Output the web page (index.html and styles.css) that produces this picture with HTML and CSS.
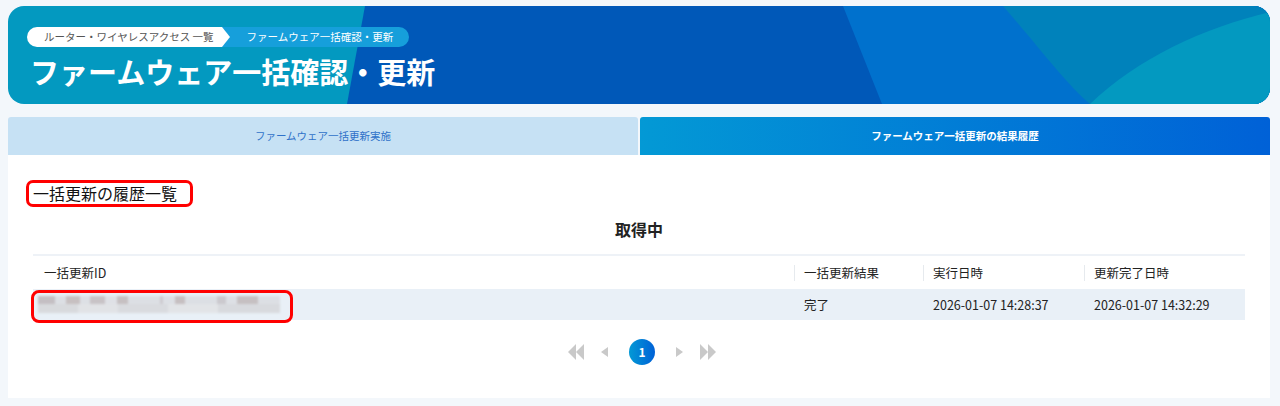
FILE: index.html
```html
<!DOCTYPE html>
<html lang="ja">
<head>
<meta charset="UTF-8">
<meta name="viewport" content="width=device-width, initial-scale=1.0">
<title>ファームウェア一括確認・更新</title>
<link rel="stylesheet" href="styles.css">
</head>
<body>

<div class="page">
    <header class="hero">
        <svg class="hero-bg" viewBox="0 0 1262 98" preserveAspectRatio="none">
            <rect width="1262" height="98" fill="#0399c0"/>
            <polygon points="357,0 1262,0 1262,98 339,98" fill="#0058b8"/>
            <polygon points="835,0 1262,0 1262,98 874,98" fill="#0071cd"/>
            <path d="M995,0 C1030,40 1058,78 1082,98 L1262,98 L1262,0 Z" fill="#0082bb"/>
            <path d="M1082,98 C1130,52 1195,22 1262,6 L1262,98 Z" fill="#0399c0"/>
        </svg>
        <div class="crumbs">
            <span class="crumb crumb-link">ルーター・ワイヤレスアクセス 一覧</span>
            <span class="crumb crumb-current">ファームウェア一括確認・更新</span>
        </div>
        <h1>ファームウェア一括確認・更新</h1>
    </header>

    <div class="tabs">
        <div class="tab">ファームウェア一括更新実施</div>
        <div class="tab active">ファームウェア一括更新の結果履歴</div>
    </div>

    <section class="panel">
        <h2 class="section-title">一括更新の履歴一覧</h2>
        <div class="status">取得中</div>

        <table class="history">
            <thead>
                <tr>
                    <th class="col-id">一括更新ID</th>
                    <th class="col-result"><span class="sep"></span>一括更新結果</th>
                    <th class="col-date"><span class="sep"></span>実行日時</th>
                    <th class="col-date"><span class="sep"></span>更新完了日時</th>
                </tr>
            </thead>
            <tbody>
                <tr>
                    <td class="id-cell">
                        <span class="blurred"></span>
                        <span class="mark"></span>
                    </td>
                    <td>完了</td>
                    <td>2026-01-07 14:28:37</td>
                    <td>2026-01-07 14:32:29</td>
                </tr>
            </tbody>
        </table>

        <div class="pager">
            <svg class="pg" width="17" height="16" viewBox="0 0 17 16"><polygon points="8,0 8,16 0,8" fill="#c9c9c9"/><polygon points="16,0 16,16 8,8" fill="#c9c9c9"/></svg>
            <svg class="pg" width="9" height="12" viewBox="0 0 9 12"><polygon points="8,1 8,11 1,6" fill="#c9c9c9"/></svg>
            <span class="page-num">1</span>
            <svg class="pg" width="9" height="12" viewBox="0 0 9 12"><polygon points="1,1 1,11 8,6" fill="#c9c9c9"/></svg>
            <svg class="pg" width="17" height="16" viewBox="0 0 17 16"><polygon points="1,0 1,16 9,8" fill="#c9c9c9"/><polygon points="9,0 9,16 17,8" fill="#c9c9c9"/></svg>
        </div>
    </section>
</div>

</body>
</html>
```

FILE: styles.css
```css
body {
    margin: 0;
    background: #f3f7fb;
    font-family: "Noto Sans CJK JP", "Noto Sans", sans-serif;
    color: #222;
}
.page {
    padding: 6px 10px 8px 8px;
}
.hero {
    position: relative;
    height: 98px;
    border-radius: 16px;
    overflow: hidden;
    padding: 21px 0 0 19px;
    box-sizing: border-box;
}
.hero-bg {
    position: absolute;
    left: 0;
    top: 0;
    width: 100%;
    height: 100%;
}
.crumbs {
    position: relative;
    display: flex;
    height: 20px;
}
.crumb {
    font-size: 10.5px;
    line-height: 20px;
    height: 20px;
}
.crumb-link {
    position: relative;
    z-index: 1;
    background: #fff;
    color: #555;
    padding: 0 8px 0 17px;
    border-radius: 10px 0 0 10px;
}
.crumb-link::after {
    content: "";
    position: absolute;
    right: -8px;
    top: 0;
    border-left: 8px solid #fff;
    border-top: 10px solid transparent;
    border-bottom: 10px solid transparent;
}
.crumb-current {
    background: #169fdb;
    color: #fff;
    padding: 0 16px 0 25px;
    border-radius: 0 10px 10px 0;
}
.hero h1 {
    position: relative;
    margin: 4px 0 0 3px;
    font-size: 29px;
    line-height: 40px;
    font-weight: bold;
    color: #fff;
}
.tabs {
    display: flex;
    gap: 2px;
    margin-top: 13px;
}
.tab {
    flex: 1;
    height: 38px;
    line-height: 38px;
    text-align: center;
    font-size: 10.5px;
    background: #c6e1f4;
    color: #2f72c9;
    border-radius: 3px 3px 0 0;
}
.tab.active {
    background: linear-gradient(90deg, #0399d5, #0061d7);
    color: #fff;
    font-weight: bold;
}
.panel {
    background: #fff;
    padding: 25px 25px 33px 18px;
}
.section-title {
    display: inline-block;
    margin: 0;
    padding: 0 13px 0 4px;
    border: 3px solid #f00;
    border-radius: 7px;
    font-size: 16px;
    line-height: 21px;
    font-weight: normal;
    color: #111;
}
.status {
    text-align: center;
    font-size: 16px;
    font-weight: bold;
    line-height: 24px;
    margin: 10px 0 0 7px;
}
.history {
    width: calc(100% - 7px);
    margin: 13px 0 0 7px;
    border-collapse: collapse;
    border-top: 2px solid #eef2f7;
    font-size: 12.5px;
}
.history th {
    position: relative;
    text-align: left;
    font-weight: normal;
    height: 33px;
    padding: 0 0 0 10px;
    color: #222;
}
.history .col-id {
    padding-left: 11px;
}
.col-result {
    width: 119px;
}
.col-date {
    width: 151px;
}
.sep {
    position: absolute;
    left: 0;
    top: 9px;
    height: 16px;
    border-left: 1px solid #e6eaee;
}
.history td {
    background: #e9f0f7;
    height: 31px;
    padding: 0 0 0 10px;
    color: #222;
}
.history .id-cell {
    position: relative;
    padding-left: 5px;
}
.blurred {
    display: block;
    width: 242px;
    height: 17px;
    background:
        linear-gradient(90deg, #c4bfc3 0 17px, #dcdfe4 17px 28px, #c7c0c1 28px 42px, #dde0e5 42px 52px, #c8c3c6 52px 67px, #dfe1e6 67px 79px, #c6c0c2 79px 90px, #dcdfe4 90px 122px, #cdcbd0 122px 125px, #dde0e5 125px 137px, #c6bfc1 137px 147px, #dcdfe4 147px 179px, #cbc9ce 179px 188px, #dde0e5 188px 199px, #c6c0c2 199px 220px, #dcdfe4 220px) top / 100% 8px no-repeat,
        linear-gradient(90deg, #d8dadd 0 40px, #e1e3e6 40px 80px, #d9dbdf 80px 130px, #e2e4e7 130px 180px, #d8dade 180px) bottom / 100% 9px no-repeat;
    filter: blur(0.8px);
}
.mark {
    position: absolute;
    left: -2px;
    top: 1px;
    width: 262px;
    height: 33px;
    box-sizing: border-box;
    border: 3px solid #f00;
    border-radius: 8px;
}
.pager {
    display: flex;
    justify-content: center;
    align-items: center;
    gap: 15px;
    margin-top: 19px;
    padding-left: 13px;
}
.page-num {
    width: 26px;
    height: 26px;
    border-radius: 50%;
    background: linear-gradient(90deg, #0399d5, #0061d7);
    color: #fff;
    font-size: 12px;
    font-weight: bold;
    line-height: 26px;
    text-align: center;
    margin: 0 5px;
}
```
